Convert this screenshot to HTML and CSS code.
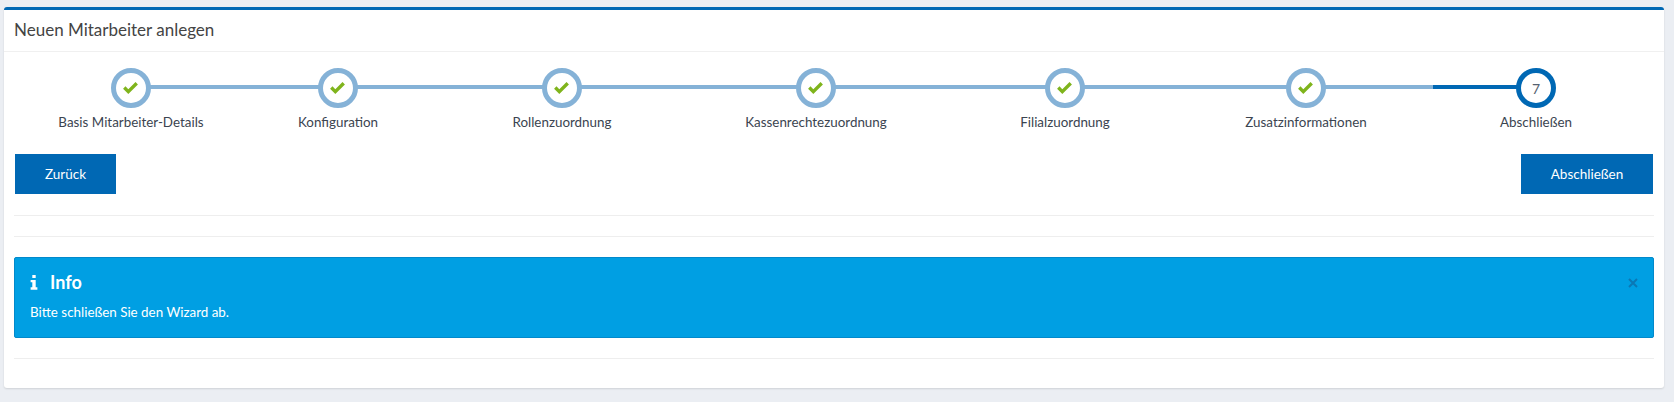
FILE: index.html
```html
<!DOCTYPE html>
<html lang="de">
<head>
<meta charset="utf-8">
<title>Neuen Mitarbeiter anlegen</title>
<link rel="stylesheet" href="styles.css">
</head>
<body>
<main class="card">
  <header class="card-header"><h1 class="card-title">Neuen Mitarbeiter anlegen</h1></header>
  <div class="card-body">
    <ol class="wizard">
      <li class="step done"><span class="bubble"><svg class="check" viewBox="1.2 1.4 13.6 11"><path d="M1.2 7.6 3.4 5.4 6 8 12.6 1.4 14.8 3.6 6 12.4Z"/></svg></span><span class="label">Basis Mitarbeiter-Details</span></li>
      <li class="step done"><span class="bubble"><svg class="check" viewBox="1.2 1.4 13.6 11"><path d="M1.2 7.6 3.4 5.4 6 8 12.6 1.4 14.8 3.6 6 12.4Z"/></svg></span><span class="label">Konfiguration</span></li>
      <li class="step done"><span class="bubble"><svg class="check" viewBox="1.2 1.4 13.6 11"><path d="M1.2 7.6 3.4 5.4 6 8 12.6 1.4 14.8 3.6 6 12.4Z"/></svg></span><span class="label">Rollenzuordnung</span></li>
      <li class="step done"><span class="bubble"><svg class="check" viewBox="1.2 1.4 13.6 11"><path d="M1.2 7.6 3.4 5.4 6 8 12.6 1.4 14.8 3.6 6 12.4Z"/></svg></span><span class="label">Kassenrechtezuordnung</span></li>
      <li class="step done"><span class="bubble"><svg class="check" viewBox="1.2 1.4 13.6 11"><path d="M1.2 7.6 3.4 5.4 6 8 12.6 1.4 14.8 3.6 6 12.4Z"/></svg></span><span class="label">Filialzuordnung</span></li>
      <li class="step done"><span class="bubble"><svg class="check" viewBox="1.2 1.4 13.6 11"><path d="M1.2 7.6 3.4 5.4 6 8 12.6 1.4 14.8 3.6 6 12.4Z"/></svg></span><span class="label">Zusatzinformationen</span></li>
      <li class="step active"><span class="bubble">7</span><span class="label">Abschließen</span></li>
    </ol>
    <div class="actions">
      <button class="btn btn-back" type="button">Zurück</button>
      <button class="btn btn-finish" type="button">Abschließen</button>
    </div>
    <hr class="rule rule-first">
    <hr class="rule rule-second">
    <section class="alert">
      <h2 class="alert-title"><svg class="info-icon" viewBox="0 0 8 16"><path d="M2.2 0H5.8V3.2H2.2ZM.4 5.2H5.8V13H7.6V15.6H.4V13H2.2V7.8H.4Z"/></svg>Info</h2>
      <p class="alert-text">Bitte schließen Sie den Wizard ab.</p>
      <svg class="close" viewBox="0 0 10 10"><path d="M1 1 9 9M9 1 1 9"/></svg>
    </section>
    <hr class="rule rule-last">
  </div>
</main>
</body>
</html>
```
FILE: styles.css
```css
* { box-sizing: border-box; }
html, body { margin: 0; height: 100%; }
body {
  background: #ebeef3;
  padding: 7px 10px 14px 4px;
  font-family: "Lato", "Liberation Sans", sans-serif;
  font-size: 14px;
  color: #3b4450;
}
.card {
  background: #fff;
  border-top: 3px solid #0068b4;
  border-radius: 3px;
  box-shadow: 0 1px 2px rgba(0, 0, 0, .12);
  height: 381px;
}
.card-header {
  height: 42px;
  border-bottom: 1px solid #f0f0f0;
  padding: 0 10px 2px;
  display: flex;
  align-items: center;
}
.card-title {
  margin: 0;
  font-size: 17px;
  font-weight: 400;
  color: #444;
}
.card-body { padding: 16px 10px 0; }
.wizard {
  list-style: none;
  margin: 0;
  padding: 0 15px;
  display: grid;
  grid-template-columns: 204fr 210fr 238fr 270fr 228fr 254fr 206fr;
}
.step {
  position: relative;
  display: flex;
  flex-direction: column;
  align-items: center;
}
.step::before {
  content: "";
  position: absolute;
  left: 0;
  right: 50%;
  top: 17px;
  height: 4px;
  background: #85b2d7;
}
.step:first-child::before { display: none; }
.step::after {
  content: "";
  position: absolute;
  left: 50%;
  right: 0;
  top: 17px;
  height: 4px;
  background: #85b2d7;
}
.step:last-child::after { display: none; }
.step.active::before { background: #0068b4; }
.bubble {
  position: relative;
  z-index: 1;
  width: 40px;
  height: 40px;
  border: 5px solid #85b2d7;
  border-radius: 50%;
  background: #fff;
  display: flex;
  align-items: center;
  justify-content: center;
  font-size: 14px;
  color: #566270;
}
.active .bubble { border-color: #0068b4; }
.check { width: 15px; height: 12px; margin-right: 2px; fill: #7fb41c; }
.label {
  margin-top: 5px;
  line-height: 18px;
  font-size: 13.4px;
  white-space: nowrap;
}
.actions {
  display: flex;
  justify-content: space-between;
  margin-top: 23px;
  padding: 0 1px;
}
.btn {
  height: 40px;
  border: 0;
  padding: 0;
  background: #0068b4;
  color: #fff;
  font: 13.5px "Lato", "Liberation Sans", sans-serif;
}
.btn-back { width: 101px; }
.btn-finish { width: 132px; }
.rule { border: 0; border-top: 1px solid #eeeeee; margin: 0; }
.rule-first { margin-top: 21px; }
.rule-second { margin-top: 20px; }
.alert {
  position: relative;
  margin-top: 20px;
  height: 81px;
  background: #009fe3;
  border: 1px solid #0289cb;
  border-radius: 2px;
  padding: 14px 15px;
  color: #fff;
}
.alert-title {
  margin: 0;
  display: flex;
  align-items: center;
  font-size: 18px;
  line-height: 20px;
  font-weight: 700;
}
.info-icon { width: 8px; height: 15px; fill: #fff; margin-right: 12px; }
.alert-text { margin: 12px 0 0; font-size: 13.4px; line-height: 17px; }
.close {
  position: absolute;
  right: 15px;
  top: 20px;
  width: 10px;
  height: 10px;
  stroke: #0a78b5;
  stroke-width: 2;
  fill: none;
}
.rule-last { margin-top: 20px; }
```
